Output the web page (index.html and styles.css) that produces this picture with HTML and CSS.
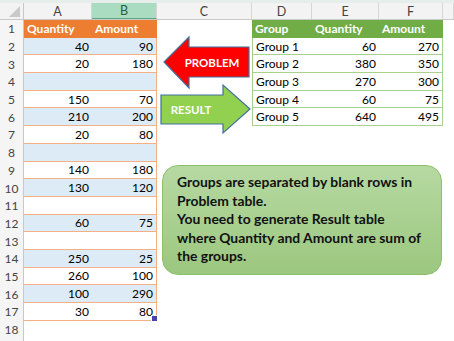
FILE: index.html
```html
<!DOCTYPE html>
<html>
<head>
<meta charset="utf-8">
<link rel="stylesheet" href="styles.css">
</head>
<body>
<div class="sheet">
  <div class="strip"></div>
  <div class="row hdr">
    <div class="ch corner"><span class="tri"></span></div>
    <div class="ch">A</div>
    <div class="ch sel">B</div>
    <div class="ch">C</div>
    <div class="ch">D</div>
    <div class="ch">E</div>
    <div class="ch">F</div>
    <div class="ch"></div>
  </div>

  <div class="row">
    <div class="rh">1</div>
    <div class="c ph">Quantity</div>
    <div class="c ph">Amount</div>
    <div class="c"></div>
    <div class="c gh">Group</div>
    <div class="c gh">Quantity</div>
    <div class="c gh">Amount</div>
    <div class="c"></div>
  </div>
  <div class="row">
    <div class="rh">2</div>
    <div class="c pb n">40</div>
    <div class="c pb pr n">90</div>
    <div class="c"></div>
    <div class="c gd gl">Group 1</div>
    <div class="c gd n">60</div>
    <div class="c gd gr n">270</div>
    <div class="c"></div>
  </div>
  <div class="row">
    <div class="rh">3</div>
    <div class="c pw n">20</div>
    <div class="c pw pr n">180</div>
    <div class="c"></div>
    <div class="c gd gl">Group 2</div>
    <div class="c gd n">380</div>
    <div class="c gd gr n">350</div>
    <div class="c"></div>
  </div>
  <div class="row">
    <div class="rh">4</div>
    <div class="c pb n"></div>
    <div class="c pb pr n"></div>
    <div class="c"></div>
    <div class="c gd gl">Group 3</div>
    <div class="c gd n">270</div>
    <div class="c gd gr n">300</div>
    <div class="c"></div>
  </div>
  <div class="row">
    <div class="rh">5</div>
    <div class="c pw n">150</div>
    <div class="c pw pr n">70</div>
    <div class="c"></div>
    <div class="c gd gl">Group 4</div>
    <div class="c gd n">60</div>
    <div class="c gd gr n">75</div>
    <div class="c"></div>
  </div>
  <div class="row">
    <div class="rh">6</div>
    <div class="c pb n">210</div>
    <div class="c pb pr n">200</div>
    <div class="c"></div>
    <div class="c gd gl">Group 5</div>
    <div class="c gd n">640</div>
    <div class="c gd gr n">495</div>
    <div class="c"></div>
  </div>
  <div class="row">
    <div class="rh">7</div>
    <div class="c pw n">20</div>
    <div class="c pw pr n">80</div>
    <div class="c"></div><div class="c"></div><div class="c"></div><div class="c"></div><div class="c"></div>
  </div>
  <div class="row">
    <div class="rh">8</div>
    <div class="c pb n"></div>
    <div class="c pb pr n"></div>
    <div class="c"></div><div class="c"></div><div class="c"></div><div class="c"></div><div class="c"></div>
  </div>
  <div class="row">
    <div class="rh">9</div>
    <div class="c pw n">140</div>
    <div class="c pw pr n">180</div>
    <div class="c"></div><div class="c"></div><div class="c"></div><div class="c"></div><div class="c"></div>
  </div>
  <div class="row">
    <div class="rh">10</div>
    <div class="c pb n">130</div>
    <div class="c pb pr n">120</div>
    <div class="c"></div><div class="c"></div><div class="c"></div><div class="c"></div><div class="c"></div>
  </div>
  <div class="row">
    <div class="rh">11</div>
    <div class="c pw n"></div>
    <div class="c pw pr n"></div>
    <div class="c"></div><div class="c"></div><div class="c"></div><div class="c"></div><div class="c"></div>
  </div>
  <div class="row">
    <div class="rh">12</div>
    <div class="c pb n">60</div>
    <div class="c pb pr n">75</div>
    <div class="c"></div><div class="c"></div><div class="c"></div><div class="c"></div><div class="c"></div>
  </div>
  <div class="row">
    <div class="rh">13</div>
    <div class="c pw n"></div>
    <div class="c pw pr n"></div>
    <div class="c"></div><div class="c"></div><div class="c"></div><div class="c"></div><div class="c"></div>
  </div>
  <div class="row">
    <div class="rh">14</div>
    <div class="c pb n">250</div>
    <div class="c pb pr n">25</div>
    <div class="c"></div><div class="c"></div><div class="c"></div><div class="c"></div><div class="c"></div>
  </div>
  <div class="row">
    <div class="rh">15</div>
    <div class="c pw n">260</div>
    <div class="c pw pr n">100</div>
    <div class="c"></div><div class="c"></div><div class="c"></div><div class="c"></div><div class="c"></div>
  </div>
  <div class="row">
    <div class="rh">16</div>
    <div class="c pb n">100</div>
    <div class="c pb pr n">290</div>
    <div class="c"></div><div class="c"></div><div class="c"></div><div class="c"></div><div class="c"></div>
  </div>
  <div class="row">
    <div class="rh">17</div>
    <div class="c pw n">30</div>
    <div class="c pw pr n handle">80</div>
    <div class="c"></div><div class="c"></div><div class="c"></div><div class="c"></div><div class="c"></div>
  </div>
  <div class="row">
    <div class="rh">18</div>
    <div class="c"></div><div class="c"></div><div class="c"></div><div class="c"></div><div class="c"></div><div class="c"></div><div class="c"></div>
  </div>
  <div class="row">
    <div class="rh"></div>
    <div class="c"></div><div class="c"></div><div class="c"></div><div class="c"></div><div class="c"></div><div class="c"></div><div class="c"></div>
  </div>

  <svg class="arrows" width="110" height="110" viewBox="0 0 110 110">
    <polygon points="14,32 39,7 39,17 99,17 99,47 39,47 39,58" fill="#ff0000" stroke="#41719c" stroke-width="1.2"/>
    <text x="62" y="36.5" text-anchor="middle" class="atext">PROBLEM</text>
    <polygon points="11,65 73,65 73,55 100,79 73,103 73,94 11,94" fill="#92d050" stroke="#41719c" stroke-width="1.2"/>
    <text x="41" y="83.5" text-anchor="middle" class="atext">RESULT</text>
  </svg>

  <div class="note">
    <p>Groups are separated by blank rows in</p>
    <p>Problem table.</p>
    <p>You need to generate Result table</p>
    <p>where Quantity and Amount are sum of</p>
    <p>the groups.</p>
  </div>
</div>
</body>
</html>
```
FILE: styles.css
```css
* { box-sizing: border-box; margin: 0; padding: 0; }
body { margin: 0; background: #fff; font-family: Lato, "Open Sans", sans-serif; font-size: 12px; color: #000; }
.sheet { position: relative; width: 454px; height: 341px; overflow: hidden; background: #fff; }
.strip { height: 3px; background: #e6eeeb; }
.row { display: grid; grid-template-columns: 24px 68px 65px 95px 60px 67px 64px 11px; height: 17.7px; }
.hdr { height: 17px; background: #f3f3f3; border-bottom: 1px solid #c8c8c8; color: #444; }
.ch { display: flex; align-items: center; justify-content: center; border-right: 1px solid #d6d6d6; font-size: 12.5px; }
.ch.sel { background: #a9dcc0; color: #2e5a43; border-bottom: 1px solid #5fa57f; }
.corner { justify-content: flex-end; align-items: flex-end; padding: 0 3px 2px 0; border-right: 1px solid #c8c8c8; }
.tri { width: 0; height: 0; border-left: 11px solid transparent; border-bottom: 11px solid #c9c9c9; }
.rh { display: flex; align-items: center; justify-content: center; background: #f5f5f5; border-right: 1px solid #c8c8c8; color: #444; font-size: 12px; }
.c { display: flex; align-items: center; padding: 0 3px; white-space: nowrap; }
.n { justify-content: flex-end; }
.ph { background: #ed7d31; color: #fff; font-weight: 700; }
.pb { background: #ddebf7; border-bottom: 1px solid #f4b084; }
.pw { background: #fff; border-bottom: 1px solid #f4b084; }
.pr { border-right: 1px solid #f4b084; }
.gh { background: #70ad47; color: #fff; font-weight: 700; }
.gd { background: #fff; border-bottom: 1px solid #a9d08e; }
.gl { border-left: 1px solid #a9d08e; }
.gr { border-right: 1px solid #a9d08e; }
.handle { position: relative; }
.handle::after { content: ""; position: absolute; right: -2px; bottom: -2px; width: 5px; height: 5px; background: #4646a8; border: 1px solid #fff; }
.arrows { position: absolute; left: 150px; top: 30px; }
.atext { fill: #fff; font-family: Lato, sans-serif; font-weight: 700; font-size: 11.5px; }
.note { position: absolute; left: 162px; top: 165px; width: 280px; height: 110px; border: 1px solid #8dbf6b; border-radius: 16px; background: linear-gradient(#b6d9a2, #9cc77f); padding: 7px 0 0 14px; font-weight: 700; font-size: 13.9px; line-height: 18.5px; color: #111; white-space: nowrap; }
```
